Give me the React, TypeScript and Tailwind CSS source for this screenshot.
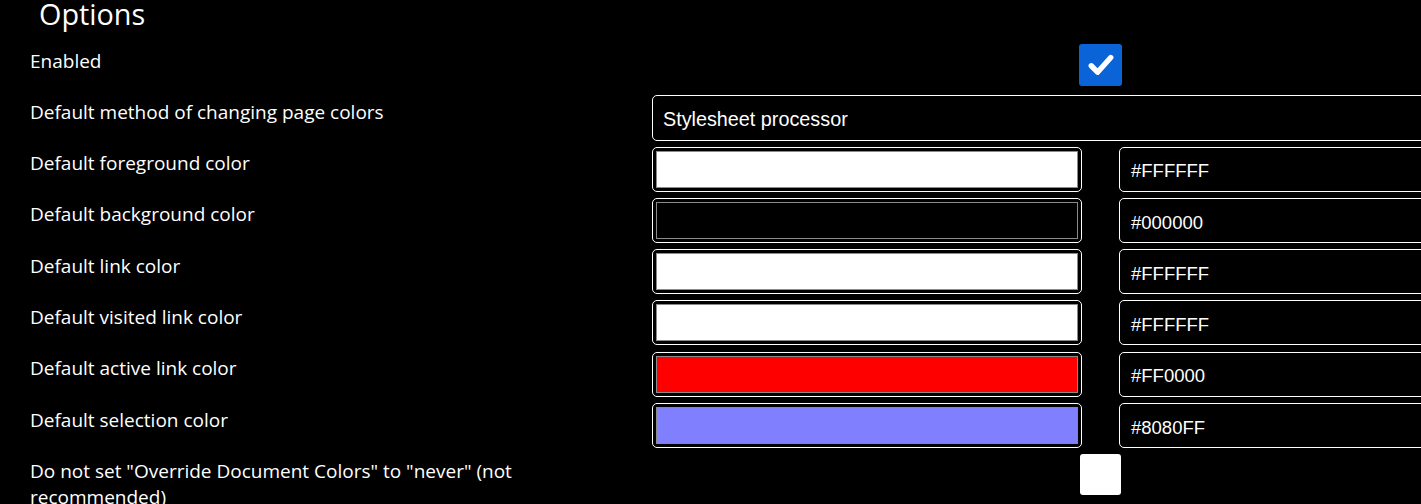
const labelFont = { fontFamily: '"Open Sans", "Noto Sans", sans-serif' };

type ColorRow = { label: string; value: string; swatch: string };

const colorRows: ColorRow[] = [
  { label: "Default foreground color", value: "#FFFFFF", swatch: "bg-white" },
  { label: "Default background color", value: "#000000", swatch: "bg-black" },
  { label: "Default link color", value: "#FFFFFF", swatch: "bg-white" },
  { label: "Default visited link color", value: "#FFFFFF", swatch: "bg-white" },
  { label: "Default active link color", value: "#FF0000", swatch: "bg-[#ff0000]" },
  { label: "Default selection color", value: "#8080FF", swatch: "bg-[#8080ff]" },
];

function Label({ children }: { children: React.ReactNode }) {
  return (
    <div className="w-[622px] shrink-0 pt-[4px] pr-[100px] text-[19px] leading-[26px] text-white">
      {children}
    </div>
  );
}

function Row({ children }: { children: React.ReactNode }) {
  return <div className="flex h-[51.3px] items-start">{children}</div>;
}

export default function App() {
  return (
    <div className="h-[504px] w-[1421px] overflow-hidden bg-black pl-[30px] text-white" style={labelFont}>
      <h1 className="h-[45.5px] pl-[9px] pt-[1px] text-[28.8px] leading-[30px] font-normal -mt-[2px]">Options</h1>

      <Row>
        <Label>Enabled</Label>
        <div className="pl-[427px] pt-[0.5px]">
          <div className="flex h-[42px] w-[43px] items-center justify-center rounded-[3px] bg-[#0b63d8]">
            <svg viewBox="0 0 24 24" className="h-[36px] w-[36px]" fill="none" stroke="white" strokeWidth="3.6" strokeLinecap="round" strokeLinejoin="round">
              <path d="M5.5 12.5l4.2 4.3L18.5 7" />
            </svg>
          </div>
        </div>
      </Row>

      <Row>
        <Label>Default method of changing page colors</Label>
        <div className="flex h-[46px] w-[900px] shrink-0 items-center rounded-[5px] border border-white pl-[10px] pt-[4px] text-[19.8px] font-[family-name:'Liberation_Sans',sans-serif]">
          Stylesheet processor
        </div>
      </Row>

      {colorRows.map((row) => (
        <Row key={row.label}>
          <Label>{row.label}</Label>
          <div className="flex shrink-0 items-start gap-[37px] pt-[0.5px]">
            <div className="h-[45px] w-[430px] rounded-[5px] border border-white p-[3px]">
              <div className={`h-full w-full border border-[#8a8a8a] ${row.swatch}`} />
            </div>
            <div className="flex h-[45px] w-[400px] items-center rounded-[5px] border border-white pl-[11px] pt-[4px] text-[18.5px] font-[family-name:'Liberation_Sans',sans-serif]">
              {row.value}
            </div>
          </div>
        </Row>
      ))}

      <Row>
        <Label>Do not set "Override Document Colors" to "never" (not recommended)</Label>
        <div className="pl-[428px] pt-[0.5px]">
          <div className="h-[41px] w-[41px] rounded-[3px] bg-white" />
        </div>
      </Row>
    </div>
  );
}
